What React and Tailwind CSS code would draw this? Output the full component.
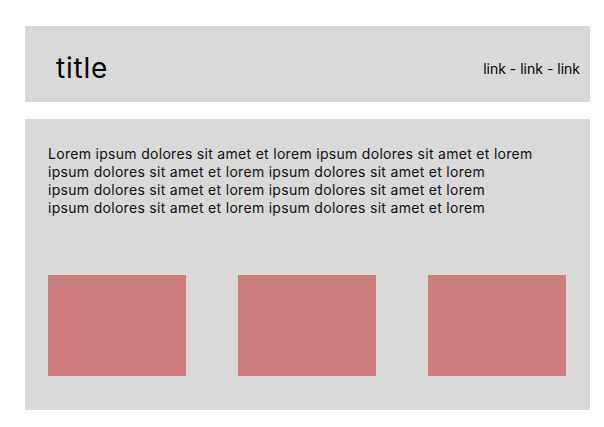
export default function App() {
  return (
    <div className="min-h-[427px] w-[604px] bg-white pl-[25px] pt-[26px]" style={{ fontFamily: "Inter, 'Noto Sans', sans-serif" }}>
      <header className="flex h-[76px] w-[565px] items-center justify-between bg-[#d9d9d9] pl-[31px] pr-[10px]">
        <h1 className="mt-[7px] text-[28px] leading-none tracking-[0.8px] text-black">title</h1>
        <nav className="mt-[9px] text-[14px] leading-none text-black">link - link - link</nav>
      </header>
      <main className="mt-[17px] h-[291px] w-[565px] bg-[#d9d9d9] pl-[23px] pr-[24px] pt-[26px]">
        <p className="text-[14px] leading-[18px] tracking-[0.3px] text-[#111]">
          <span className="block whitespace-nowrap">Lorem ipsum dolores sit amet et lorem ipsum dolores sit amet et lorem</span>
          <span className="block whitespace-nowrap">ipsum dolores sit amet et lorem ipsum dolores sit amet et lorem</span>
          <span className="block whitespace-nowrap">ipsum dolores sit amet et lorem ipsum dolores sit amet et lorem</span>
          <span className="block whitespace-nowrap">ipsum dolores sit amet et lorem ipsum dolores sit amet et lorem</span>
        </p>
        <div className="mt-[58px] flex gap-[52px]">
          <div className="h-[101px] w-[138px] bg-[#cf7e7e]" />
          <div className="h-[101px] w-[138px] bg-[#cf7e7e]" />
          <div className="h-[101px] w-[138px] bg-[#cf7e7e]" />
        </div>
      </main>
    </div>
  );
}
